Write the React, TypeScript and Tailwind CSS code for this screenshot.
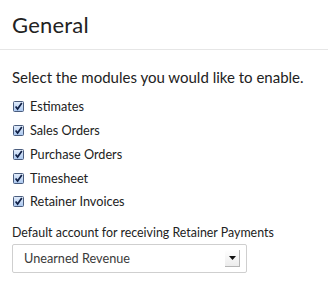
import React from "react";

const modules = ["Estimates", "Sales Orders", "Purchase Orders", "Timesheet", "Retainer Invoices"];

function Check() {
  return (
    <svg width="11" height="11" viewBox="0 0 11 11" className="shrink-0">
      <defs>
        <linearGradient id="cb" x1="0" y1="0" x2="0" y2="1">
          <stop offset="0" stopColor="#e3edfb" />
          <stop offset="1" stopColor="#a9c6ee" />
        </linearGradient>
      </defs>
      <rect x="0.5" y="0.5" width="10" height="10" rx="1" fill="url(#cb)" stroke="#4a5d7e" />
      <path d="M2.6 5.4 L4.6 8 L8.8 2" fill="none" stroke="#0f1f45" strokeWidth="1.7" />
    </svg>
  );
}

export default function App() {
  return (
    <div className="w-[328px] h-[291px] bg-white text-[#222] font-['Lato','Open_Sans',sans-serif]">
      <div className="h-[50px] border-b border-[#e6e6e6] px-3 pt-[14px]">
        <h1 className="text-[22px] font-normal leading-none tracking-[0.2px]">General</h1>
      </div>
      <div className="px-3 pt-[19px]">
        <p className="text-[15px] leading-4">Select the modules you would like to enable.</p>
        <ul className="mt-[10px] text-[12.7px]">
          {modules.map((m) => (
            <li key={m} className="flex items-center gap-[6px] h-[23.75px] pl-[1px]">
              <Check />
              <span>{m}</span>
            </li>
          ))}
        </ul>
        <p className="mt-[11px] text-[12.4px] leading-4">Default account for receiving Retainer Payments</p>
        <div className="mt-[3px] w-[235px] h-[29px] border border-[#cfcfcf] rounded-[2px] flex items-center justify-between pl-[11px] pr-[6px]">
          <span className="text-[12.7px] text-[#3a3a3a]">Unearned Revenue</span>
          <span className="w-[15px] h-[17px] border-r border-b border-[#b5b5b5] bg-gradient-to-b from-white to-[#ececec] flex items-center justify-center">
            <svg width="7" height="4" viewBox="0 0 7 4"><path d="M0 0 H7 L3.5 4 Z" fill="#111" /></svg>
          </span>
        </div>
      </div>
    </div>
  );
}
